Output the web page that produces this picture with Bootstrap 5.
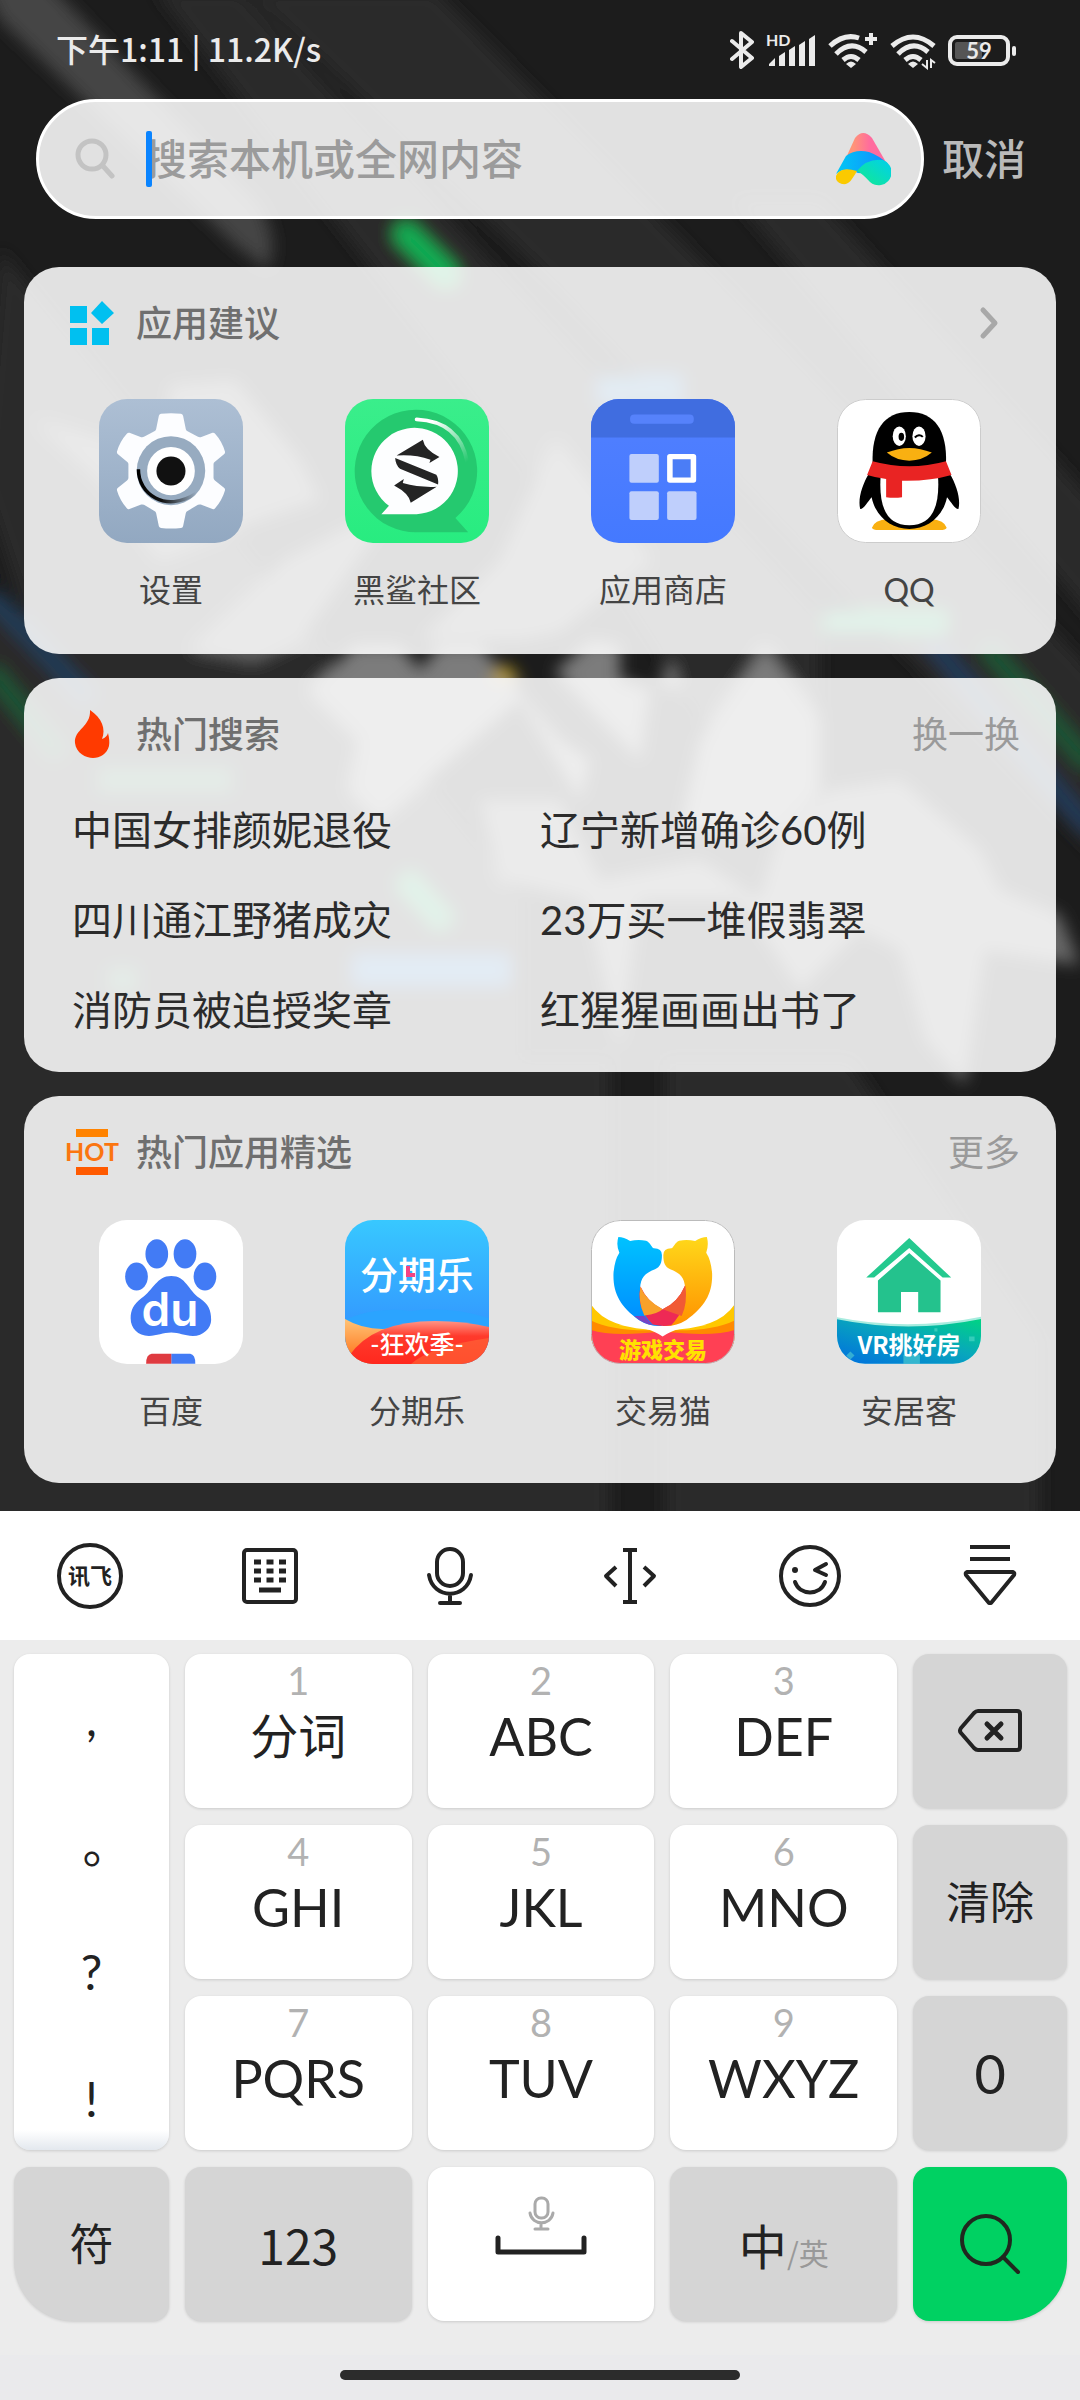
<!DOCTYPE html>
<html lang="zh-CN">
<head>
<meta charset="utf-8">
<meta name="viewport" content="width=device-width, initial-scale=1">
<title>搜索</title>
<link href="https://cdn.jsdelivr.net/npm/bootstrap@5.3.0/dist/css/bootstrap.min.css" rel="stylesheet">
<style>
body{font-family:"Lato","Noto Sans CJK SC",sans-serif;background:#ececec;color:#222}
button,input{font-family:inherit}
svg{display:block;flex:none}
.stage{background:#1c1c1c;padding-bottom:28px;overflow:hidden}
.wallpaper{left:0;top:0;width:100%;height:100%}
.statusbar{height:99px;padding:0 64px 0 56px;color:#ebebeb;font-size:32px;font-weight:500}
.clock{font-family:"Noto Sans CJK SC",sans-serif;line-height:48px;padding-bottom:4px}
.status-icons{gap:12px}
.search-row{padding:0 54px 0 36px;gap:18px;margin-bottom:48px}
.search-box{height:120px;border:3px solid #fff;border-radius:60px;background:rgba(255,255,255,.87);padding:0 30px 0 36px}
.search-box input{font-size:42px;font-weight:500;height:60px;margin-left:30px;background:none;outline:0}
.search-box input::placeholder{color:#9b9b9b;opacity:1}
.caret{left:31px;top:2px;width:6px;height:56px;border-radius:2px;background:#0a84ff}
.cancel{font-size:42px;font-weight:500;color:#bababa;white-space:nowrap}
.panels{gap:24px;padding:0 24px}
.panel{background:rgba(255,255,255,.87);border-radius:35px}
.panel-head{height:112px;padding:0 36px 0 42px}
.panel-icon{width:54px;height:54px;margin-right:16px}
.panel-title{font-size:36px;font-weight:500;color:#6f6f6f;line-height:48px}
.panel-link{font-size:36px;color:#9a9a9a;line-height:48px}
.apps{padding:12px 24px 48px}
.apps-lower{padding:20px 24px 40px}
.app-link{color:#444;font-size:32px;line-height:48px;gap:23px;flex:1 1 0}
.app-art{width:144px;height:144px;border-radius:28px;overflow:hidden}
.hot-list{grid-template-columns:1fr 1fr;padding:0 48px 17px;margin-top:-5px}
.hot-list a{font-size:40px;line-height:90px;color:#2b2b2b}
.more{margin-right:20px}
.toolbar-keys{height:129px;background:#fff}
.tool{flex:1 1 0}
.keys{grid-template-columns:155fr 227fr 227fr 227fr 154fr;grid-auto-rows:154px;gap:17px 16px;padding:14px 13px 34px 14px}
.kkey{border:0;border-radius:16px;background:#fff;color:#222;box-shadow:0 1px 3px rgba(0,0,0,.14);padding:0;font-size:44px}
.fn{background:#d5d5d5}
.num{font-size:38px;line-height:40px;color:#b2b2b2;padding-top:6px}
.let{font-size:52px;line-height:72px}
.let-cn{font-size:48px;line-height:72px}
.punct{grid-row:span 3;background:linear-gradient(#fff 96%,#e3e8ee)}
.punct button{border:0;background:none;font-size:48px;line-height:60px;flex:0 0 127px;color:#222}
.punct .cn-stop{padding-left:36px}
.big{font-size:54px}
.mid{font-size:48px;font-family:"Noto Sans CJK SC",sans-serif}
.alt{font-size:30px;color:#999}
.corner-l{border-bottom-left-radius:60px}
.corner-r{border-bottom-right-radius:60px;background:#00d162}
.homebar{height:45px;background:#eaeaec;padding-top:15px}
.homebar div{width:400px;height:10px;border-radius:5px;background:#2c2c2c}
svg text{font-family:"Lato","Noto Sans CJK SC",sans-serif}
</style>
<script src="https://cdn.jsdelivr.net/npm/bootstrap@5.3.0/dist/js/bootstrap.bundle.min.js"></script>
</head>
<body>
<main class="stage position-relative">
<svg class="wallpaper position-absolute" viewBox="0 0 1080 1511" preserveAspectRatio="none" aria-hidden="true">
<defs><filter id="soft" x="-20%" y="-20%" width="140%" height="140%"><feGaussianBlur stdDeviation="8"/></filter></defs>
<g filter="url(#soft)">
<path d="M155 -10H240L820 620V900L600 560Z M245 -10H435L740 300L1100 680V860L560 290Z" fill="#2a2a2a"/>
<path d="M0 250L220 520L520 900V1540H-20V580L40 660L-20 480Z" fill="#292929"/>
<path d="M735 200H820L1110 520V640Z" fill="#292929"/>
<path d="M540 1060H610V1540H540Z M665 1060H850L1040 1340V1540H665Z" fill="#2a2a2a"/>
<path d="M-20 1060H600V1540H-20Z" fill="#292929"/>
<path d="M-20 -20H45L260 205Q280 240 268 270L235 245L0 20Z" fill="#454545"/>
<path d="M406 234L446 274" stroke="#10b055" stroke-width="24" stroke-linecap="round"/>
<path d="M-10 595L90 700" stroke="#223c58" stroke-width="18"/>
<path d="M-10 670L60 755M985 645L1090 765" stroke="#1c5534" stroke-width="20"/>
<path d="M930 640L1090 830" stroke="#223a58" stroke-width="18"/>
<path d="M35 420L165 460L170 385L235 380L300 460L320 500L260 520L160 560L100 480Z" fill="#5e5e5e"/>
<path d="M285 560L400 500L300 640L255 662L190 650Z" fill="#606060"/>
<path d="M555 440L650 560L560 632L520 640L420 640L500 560Z" fill="#606060"/>
<path d="M310 690L355 645H400L420 670L440 645H480L560 740L590 760L580 800L520 700L450 760L380 820L350 790L360 740Z" fill="#7c7c7c"/>
<path d="M555 672L590 640L620 645V680L650 690L640 760L600 720Z" fill="#7c7c7c"/>
<path d="M670 660L680 690L660 685ZM765 645L820 720V790L780 830L680 830L700 740Z" fill="#7c7c7c"/>
<path d="M480 800H560L600 880L700 860L760 900L780 830L830 790L900 780L980 850L1000 890L1060 915L1080 965L985 950L965 1085L925 1040L900 950L860 930L800 990L740 900L640 900L620 1050L585 900L500 880Z" fill="#686868"/>
<path d="M600 390H680" stroke="#2870a8" stroke-width="26"/>
<path d="M825 622H945" stroke="#20a060" stroke-width="20"/>
<path d="M355 970H508" stroke="#2870b0" stroke-width="26"/>
<path d="M404 878L446 924" stroke="#20a060" stroke-width="20"/>
<path d="M100 780H230M110 980H135" stroke="#307050" stroke-width="20"/>
<path d="M495 678L505 668L515 678Z" fill="#c0a018" stroke="#c0a018" stroke-width="6"/>
</g>
</svg>
<div class="position-relative">
<header class="statusbar d-flex align-items-center justify-content-between">
<span class="clock">下午1:11 | 11.2K/s</span>
<div class="status-icons d-flex align-items-center">
<svg width="24" height="40" viewBox="0 0 24 40" fill="none" stroke="#ebebeb" stroke-width="4" stroke-linejoin="round" stroke-linecap="round" aria-label="蓝牙"><path d="M2 11L22 28L11 37V3L22 12L2 29"/></svg>
<svg width="50" height="40" viewBox="0 0 50 40" fill="#ebebeb" aria-label="信号"><text x="0" y="16" font-size="16" font-weight="700">HD</text><path d="M3 36V34L9 28V36ZM13 36V26L19 22V36ZM23 36V20L29 16V36ZM33 36V15L39 11V36ZM43 36V9L49 5V36Z"/></svg>
<svg width="50" height="40" viewBox="0 0 50 40" fill="none" stroke="#ebebeb" stroke-width="5" aria-label="无线网络"><path d="M2 16Q16 3 31 8M8 24Q23 9 38 22M15 30Q23 23 31 30"/><path d="M18 34Q23 29 28 34L23 38Z" fill="#ebebeb" stroke="none"/><path d="M43 3V15M37 9H49" stroke-width="4"/></svg>
<svg width="46" height="40" viewBox="0 0 46 40" fill="none" stroke="#ebebeb" stroke-width="5" aria-label="无线网络二"><path d="M2 16Q23 -2 44 16M8 24Q23 9 38 22M15 30Q23 23 31 30"/><path d="M18 34Q23 29 28 34L23 38Z" fill="#ebebeb" stroke="none"/><path d="M32 34L37 38V30M45 33L41 30V38" stroke-width="2"/></svg>
<svg width="68" height="40" viewBox="0 0 68 40" aria-label="电量"><rect x="2" y="7" width="58" height="27" rx="7" fill="none" stroke="#ebebeb" stroke-width="4"/><rect x="7" y="12" width="27" height="17" rx="2" fill="#555"/><rect x="64" y="16" width="4" height="10" rx="2" fill="#ebebeb"/><text x="31" y="29" text-anchor="middle" font-size="22" font-weight="700" fill="#ebebeb">59</text></svg>
</div>
</header>
<form class="search-row d-flex align-items-center" role="search">
<div class="search-box d-flex align-items-center flex-grow-1">
<svg width="40" height="42" viewBox="0 0 40 42" fill="none" stroke="#c3c3c3" stroke-width="5" stroke-linecap="round"><circle cx="17" cy="17" r="14"/><path d="M28 28L37 38"/></svg>
<div class="position-relative flex-grow-1"><input class="form-control border-0 shadow-none p-0" type="text" placeholder="搜索本机或全网内容" aria-label="搜索本机或全网内容"><span class="caret position-absolute"></span></div>
<svg width="56" height="54" viewBox="0 0 56 54" aria-hidden="true"><defs><linearGradient id="a1"><stop offset=".2" stop-color="#ff9478"/><stop offset=".6" stop-color="#ff6b9e"/></linearGradient><linearGradient id="a2"><stop offset="0" stop-color="#00c8f4"/><stop offset=".9" stop-color="#1090ff"/></linearGradient><linearGradient id="a3" x1="0" y1="1" x2="1" y2="0"><stop offset=".3" stop-color="#0de3a8"/><stop offset="1" stop-color="#00cfee"/></linearGradient></defs><path d="M20 6Q28 -4 37 6L52 32L25 36L10 28Z" fill="url(#a1)"/><path d="M1 42L11 24Q20 17 34 20Q45 24 53 32L38 42L23 41Q10 34 1 42Z" fill="url(#a2)"/><path d="M22 39Q32 26 48 28A13 13 0 0 1 46 53C34 55 33 44 22 39Z" fill="url(#a3)"/><path d="M1 44Q5 34 22 39C16 49 14 53 7 52Q0 50 1 44Z" fill="#fbca00"/></svg>
</div>
<button type="button" class="btn border-0 p-0 cancel">取消</button>
</form>
<div class="panels d-flex flex-column">
<section class="panel">
<div class="panel-head d-flex align-items-center">
<svg class="panel-icon" viewBox="0 0 54 54" fill="#00c0f0"><path d="M4 10H21V27H4ZM4 32H21V49H4ZM26 32H43V49H26ZM36 5L48 17L36 28L25 17Z"/></svg>
<h2 class="panel-title m-0 flex-grow-1">应用建议</h2>
<a href="#" class="more" aria-label="更多应用"><svg width="24" height="36" viewBox="0 0 24 36" fill="none" stroke="#a8a8a8" stroke-width="5" stroke-linecap="round" stroke-linejoin="round"><path d="M7 5L19 18L7 31"/></svg></a>
</div>
<div class="apps apps-lower d-flex">
<a href="#" class="app-link d-flex flex-column align-items-center text-decoration-none">
<svg class="app-art" viewBox="0 0 144 144"><defs><linearGradient id="s1" x2="0" y2="1"><stop stop-color="#adbfd4"/><stop offset="1" stop-color="#92a8c1"/></linearGradient><linearGradient id="s2"><stop stop-color="#000"/><stop offset=".4" stop-color="#111"/><stop offset="1" stop-color="#111" stop-opacity="0"/></linearGradient></defs><rect width="144" height="144" fill="url(#s1)"/>
<g transform="scale(.346 .335) translate(-289 -418)"><path fill="#fcfdff" d="M468 462Q497 459 526 462Q531 463 532 468L540 508Q541 512 545 514L575 531Q579 533 583 532L617 519Q621 518 624 521Q645 545 653 575Q654 579 651 582L624 605Q620 608 620 612V654Q620 658 624 661L651 684Q654 687 653 691Q645 720 624 745Q621 748 617 746L583 733Q579 732 575 734L545 752Q541 754 540 758L532 798Q531 803 526 803Q497 806 468 803Q463 802 462 798L454 758Q453 754 449 752L419 734Q415 732 411 733L377 746Q373 748 370 745Q349 720 341 691Q340 687 343 684L370 661Q374 658 374 654V612Q374 608 370 605L343 582Q340 579 341 575Q349 545 370 521Q373 518 377 519L411 532Q415 533 419 531L449 514Q453 512 454 508L462 468Q463 463 468 462Z"/><ellipse cx="497" cy="632" rx="99" ry="103" fill="#97abc0"/><path d="M403 628C402 700 480 760 570 700" fill="none" stroke="url(#s2)" stroke-width="10"/><ellipse cx="497" cy="633" rx="69" ry="72" fill="#fff"/><ellipse cx="497" cy="633" rx="42" ry="43" fill="#111"/></g></svg>
<span>设置</span></a>
<a href="#" class="app-link d-flex flex-column align-items-center text-decoration-none">
<svg class="app-art" viewBox="0 0 144 144"><defs><linearGradient id="k1" x2="0" y2="1"><stop stop-color="#3aee8b"/><stop offset="1" stop-color="#28ec80"/></linearGradient><linearGradient id="k2" x2="1" y2="1"><stop offset=".2" stop-color="#fff"/><stop offset="1" stop-color="#fff" stop-opacity="0"/></linearGradient></defs><rect width="144" height="144" fill="url(#k1)"/>
<g transform="scale(.346 .335) translate(-1004 -418)"><path d="M1211 816A177 183 0 1 1 1323 773L1360 816Z" fill="#25c96f"/><path d="M1211 762A125 129 0 1 0 1131 737L1109 762Z" fill="#fdfeff"/><path d="M1211 479Q1335 485 1357 605" fill="none" stroke="url(#k2)" stroke-width="11" stroke-linecap="round"/><path fill="#242424" d="M1229 540Q1234 570 1277 591L1248 609L1251 599Q1205 583 1153 587ZM1149 594L1268 644Q1275 655 1273 673L1163 626Q1150 615 1149 594ZM1194 728Q1190 700 1146 676L1174 657L1171 669Q1220 683 1269 680Z"/></g></svg>
<span>黑鲨社区</span></a>
<a href="#" class="app-link d-flex flex-column align-items-center text-decoration-none">
<svg class="app-art" viewBox="0 0 144 144"><defs><linearGradient id="m1" x2="0" y2="1"><stop stop-color="#5280ff"/><stop offset="1" stop-color="#4479ff"/></linearGradient></defs><rect width="144" height="144" fill="url(#m1)"/>
<g transform="scale(.346 .335) translate(-151 -418)"><path d="M150 418H570V533H150Z" fill="#406de0"/><rect x="264" y="464" width="184" height="28" rx="12" fill="#5682fb"/><g fill="#bfcffc"><rect x="262" y="582" width="85" height="86" rx="6"/><rect x="262" y="693" width="85" height="86" rx="6"/><rect x="371" y="693" width="85" height="86" rx="6"/></g><rect x="379" y="590" width="68" height="70" fill="#4b7df6" stroke="#fff" stroke-width="16" stroke-linejoin="round"/></g></svg>
<span>应用商店</span></a>
<a href="#" class="app-link d-flex flex-column align-items-center text-decoration-none">
<svg class="app-art" viewBox="0 0 144 144"><rect x=".5" y=".5" width="143" height="143" rx="28" fill="#fff" stroke="#ccc"/>
<g transform="scale(.346 .335) translate(-863 -418)"><path d="M964 802Q970 780 1010 776L1072 800L1134 776Q1174 780 1180 802Q1178 809 1160 809H984Q966 809 964 802Z" fill="#f9b011"/><path d="M956 640C935 675 923 718 930 746C940 747 952 724 963 711C975 770 1020 806 1072 806C1124 806 1169 770 1181 711C1192 724 1204 747 1214 746C1221 718 1209 675 1188 640Z"/><path d="M989 650Q980 795 1072 795Q1164 795 1155 650Z" fill="#fff"/><path d="M966 612C962 510 1000 457 1072 457S1182 510 1178 612Q1072 650 966 612Z"/><path d="M966 604Q1072 634 1178 604L1194 645Q1130 664 1051 662V711Q1028 714 1005 711V657Q975 653 950 645Z" fill="#e92423"/><ellipse cx="1043" cy="529" rx="19" ry="29" fill="#fff"/><ellipse cx="1100" cy="529" rx="19" ry="29" fill="#fff"/><ellipse cx="1049" cy="531" rx="8" ry="12"/><path d="M1088 533Q1100 520 1111 531" fill="none" stroke="#000" stroke-width="6"/><path d="M1007 578Q1040 564 1072 564T1137 578Q1110 602 1072 602T1007 578Z" fill="#f9b011"/></g></svg>
<span>QQ</span></a>
</div>
</section>
<section class="panel">
<div class="panel-head d-flex align-items-center">
<svg class="panel-icon" viewBox="0 0 54 54" fill="#ff3a00"><path d="M24 3C36 11 40 22 36 32Q41 30 42 26Q44 34 43 39C41 47 34 51 27 51S10 46 9 36C8 22 25 20 24 3Z"/></svg>
<h2 class="panel-title m-0 flex-grow-1">热门搜索</h2>
<a href="#" class="panel-link text-decoration-none">换一换</a>
</div>
<div class="hot-list d-grid">
<a href="#" class="text-decoration-none">中国女排颜妮退役</a><a href="#" class="text-decoration-none">辽宁新增确诊60例</a>
<a href="#" class="text-decoration-none">四川通江野猪成灾</a><a href="#" class="text-decoration-none">23万买一堆假翡翠</a>
<a href="#" class="text-decoration-none">消防员被追授奖章</a><a href="#" class="text-decoration-none">红猩猩画画出书了</a>
</div>
</section>
<section class="panel">
<div class="panel-head d-flex align-items-center">
<svg class="panel-icon" viewBox="0 0 54 54"><rect x="10" y="4" width="32" height="8" fill="#ff8300"/><rect x="10" y="42" width="32" height="8" fill="#ff5a00"/><text x="26" y="36" text-anchor="middle" font-size="25" font-weight="700" fill="#fb7510">HOT</text></svg>
<h2 class="panel-title m-0 flex-grow-1">热门应用精选</h2>
<a href="#" class="panel-link text-decoration-none">更多</a>
</div>
<div class="apps d-flex">
<a href="#" class="app-link d-flex flex-column align-items-center text-decoration-none">
<svg class="app-art" viewBox="0 0 144 144"><rect width="144" height="144" fill="#fff"/>
<g transform="scale(.344 .333) translate(-287 -390)" fill="#427bf5"><ellipse cx="455" cy="492" rx="33" ry="44"/><ellipse cx="537" cy="492" rx="33" ry="44"/><ellipse cx="396" cy="560" rx="33" ry="42"/><ellipse cx="595" cy="560" rx="33" ry="42"/><path d="M497 558C540 558 545 600 580 625C605 643 613 660 613 690C613 715 590 738 560 738C535 738 520 728 497 728S455 738 432 738C400 738 379 715 379 685C379 660 388 643 410 625C445 600 455 558 497 558Z"/><path d="M497 792H552Q567 794 567 822H497Z"/><path d="M497 792H440Q424 794 424 822H497Z" fill="#df3b41"/></g><text x="71" y="106" text-anchor="middle" font-size="46" style="font-family:Inter,sans-serif" font-weight="600" fill="#fff">du</text></svg>
<span>百度</span></a>
<a href="#" class="app-link d-flex flex-column align-items-center text-decoration-none">
<svg class="app-art" viewBox="0 0 144 144"><defs><linearGradient id="f1" x2="0" y2="1"><stop stop-color="#38c8ff"/><stop offset=".7" stop-color="#339bff"/></linearGradient><linearGradient id="f2" x2="0" y2="1"><stop stop-color="#ffc477"/><stop offset="1" stop-color="#ff6a10"/></linearGradient><linearGradient id="f3" x2="0" y2="1"><stop stop-color="#ff9484"/><stop offset=".35" stop-color="#ff3a2c"/><stop offset="1" stop-color="#ff281e"/></linearGradient></defs><rect width="144" height="144" fill="url(#f1)"/><path d="M0 100Q30 86 66 91Q104 86 144 98V125H0Z" fill="#2ba4ff"/><path d="M0 99Q22 112 50 108L30 144H0Z" fill="url(#f2)"/><path d="M4 136Q28 101 90 101Q120 101 144 107V144H0Z" fill="url(#f3)"/><path d="M66 144Q86 126 144 118V144Z" fill="#ff6a38" opacity=".6"/><text x="72" y="69" text-anchor="middle" font-size="38" font-weight="500" fill="#fff">分期乐</text><path d="M61 46H65V53H70V57H61Z" fill="#f34484"/><text x="72" y="134" text-anchor="middle" font-size="25" font-weight="500" fill="#fff">-狂欢季-</text></svg>
<span>分期乐</span></a>
<a href="#" class="app-link d-flex flex-column align-items-center text-decoration-none">
<svg class="app-art" viewBox="0 0 144 144"><defs><linearGradient id="j1" x2="0" y2="1"><stop stop-color="#00c2ff"/><stop offset="1" stop-color="#008bff"/></linearGradient><linearGradient id="j2" x2="0" y2="1"><stop stop-color="#ffd81a"/><stop offset="1" stop-color="#ff9200"/></linearGradient><clipPath id="jc"><rect width="144" height="144" rx="30"/></clipPath></defs><g clip-path="url(#jc)"><rect width="144" height="144" fill="#fff"/>
<g transform="scale(.346 .333) translate(-150 -390)"><path d="M150 644Q200 722 357 720Q515 722 565 644V760H150Z" fill="#ffc800"/><path d="M150 692Q220 728 357 720Q495 728 565 692V780H150Z" fill="#ff8a00"/><path d="M150 720Q210 742 357 725Q505 742 565 720V822H150Z" fill="#ff4054"/><path d="M230 705Q320 710 357 740Q394 710 485 705L357 690Z" fill="#fff"/><path d="M229 441Q245 441 263 453Q285 448 309 452C323 458 324 472 332 475Q355 476 355 495C355 520 350 530 335 538C310 548 293 560 292 595C290 640 310 675 357 708Q320 711 288 690C235 650 213 610 215 550Q218 510 232 488Q222 466 229 441Z" fill="url(#j1)"/><path d="M485 441Q469 441 451 453Q429 448 405 452C391 458 390 472 382 475Q359 476 359 495C359 520 364 530 379 538C404 548 421 560 422 595C424 640 404 675 357 708Q394 711 426 690C479 650 502 610 500 550Q497 510 483 488Q491 466 485 441Z" fill="url(#j2)"/><path d="M293 590Q315 640 357 658Q400 640 422 587Q430 655 382 706Q355 711 328 704Q280 655 293 590Z" fill="#ee2955"/><path d="M293 590Q307 630 357 658Q345 671 304 677Q285 635 293 590Z" fill="#f8a12a"/><path d="M422 587Q430 640 412 678L357 658Q400 640 422 587Z" fill="#f15a35"/><path d="M275 678H304L328 706Q302 703 275 678Z" fill="#7844c4"/></g><text x="72" y="138" text-anchor="middle" font-size="22" font-weight="900" fill="#ffe200">游戏交易</text></g><rect x=".5" y=".5" width="143" height="143" rx="29" fill="none" stroke="#bbb"/></svg>
<span>交易猫</span></a>
<a href="#" class="app-link d-flex flex-column align-items-center text-decoration-none">
<svg class="app-art" viewBox="0 0 144 144"><defs><linearGradient id="h1" x1="0" y1="1" x2="1" y2="0"><stop stop-color="#006de0"/><stop offset=".55" stop-color="#08a6bd"/><stop offset="1" stop-color="#00d483"/></linearGradient></defs><rect width="144" height="144" fill="#fff"/><g transform="scale(.344 .333) translate(-862 -390)"><path d="M1072 444L1194 563H1169L1072 474L970 563H947Z" fill="#25c98f"/><path d="M1072 489L1163 572V667H1098V606H1048V667H981V572Z" fill="#24c28d"/><path d="M862 682Q1072 725 1282 680V822H862Z" fill="#a8ecdf"/><path d="M862 688Q1072 732 1282 687V822H862Z" fill="url(#h1)"/><path d="M1145 715h9v10h-9zM1246 740h16v14h-16zM901 785l12 12-12 12-12-12zM1055 795h48v27h-48z" fill="#64dfd0" opacity=".5"/></g><text x="72" y="134" text-anchor="middle" font-size="24" font-weight="700" style="font-family:'Noto Sans CJK SC',sans-serif" fill="#fff">VR挑好房</text></svg>
<span>安居客</span></a>
</div>
</section>
</div>
</div>
</main>
<section aria-label="键盘">
<div class="toolbar-keys d-flex align-items-center">
<button class="tool btn border-0 p-0 d-flex justify-content-center" aria-label="讯飞"><svg width="68" height="70" viewBox="0 0 68 70"><circle cx="34" cy="35" r="31" fill="none" stroke="#222" stroke-width="4"/><text x="34" y="43" text-anchor="middle" font-size="22" font-weight="700" fill="#222">讯飞</text></svg></button>
<button class="tool btn border-0 p-0 d-flex justify-content-center" aria-label="键盘"><svg width="58" height="58" viewBox="0 0 58 58"><rect x="3" y="3" width="52" height="52" rx="3" fill="none" stroke="#222" stroke-width="4"/><path d="M13 15h32M13 24h32M13 33h32" stroke="#222" stroke-width="5" stroke-dasharray="7 5.5"/><path d="M18 43h22" stroke="#222" stroke-width="5"/></svg></button>
<button class="tool btn border-0 p-0 d-flex justify-content-center" aria-label="语音"><svg width="50" height="60" viewBox="0 0 50 60" fill="none" stroke="#222" stroke-width="4" stroke-linecap="round"><rect x="12" y="3" width="26" height="37" rx="13"/><path d="M4 29C8 54 42 54 46 29M25 48V57M15 57H35"/></svg></button>
<button class="tool btn border-0 p-0 d-flex justify-content-center" aria-label="光标"><svg width="56" height="58" viewBox="0 0 56 58" fill="none" stroke="#222" stroke-width="4" stroke-linejoin="round"><path d="M21 3H35M28 3V55M21 55H35M14 20L4 29L14 39M42 20L52 29L42 39"/></svg></button>
<button class="tool btn border-0 p-0 d-flex justify-content-center" aria-label="表情"><svg width="66" height="66" viewBox="0 0 66 66" fill="none" stroke="#222" stroke-width="4" stroke-linecap="round" stroke-linejoin="round"><circle cx="33" cy="33" r="29"/><path d="M18 39C23 53 43 53 48 39M49 21L38 27L49 32"/><circle cx="18" cy="27" r="3" fill="#222" stroke="none"/></svg></button>
<button class="tool btn border-0 p-0 d-flex justify-content-center" aria-label="收起"><svg width="58" height="64" viewBox="0 0 58 64" fill="none" stroke="#222" stroke-width="4" stroke-linejoin="round"><path d="M9 3H49M9 15H49M6 28H52Q54 29 53 31L30 59H28L5 31Q4 29 6 28Z"/></svg></button>
</div>
<div class="keys d-grid">
<div class="kkey punct d-flex flex-column overflow-hidden"><button>,</button><button class="cn-stop">。</button><button>?</button><button>!</button></div>
<button class="kkey d-flex flex-column align-items-center"><span class="num">1</span><span class="let-cn">分词</span></button>
<button class="kkey d-flex flex-column align-items-center"><span class="num">2</span><span class="let">ABC</span></button>
<button class="kkey d-flex flex-column align-items-center"><span class="num">3</span><span class="let">DEF</span></button>
<button class="kkey fn d-flex align-items-center justify-content-center" aria-label="退格"><svg width="66" height="46" viewBox="0 0 66 46" fill="none" stroke="#222" stroke-width="4" stroke-linejoin="round" stroke-linecap="round"><path d="M21 3H60Q63 3 63 6V39Q63 42 60 42H21Q19 42 17 40L4 25Q2 23 4 20L17 5Q19 3 21 3Z"/><path d="M30 16L44 30M44 16L30 30" stroke-width="5"/></svg></button>
<button class="kkey d-flex flex-column align-items-center"><span class="num">4</span><span class="let">GHI</span></button>
<button class="kkey d-flex flex-column align-items-center"><span class="num">5</span><span class="let">JKL</span></button>
<button class="kkey d-flex flex-column align-items-center"><span class="num">6</span><span class="let">MNO</span></button>
<button class="kkey fn">清除</button>
<button class="kkey d-flex flex-column align-items-center"><span class="num">7</span><span class="let">PQRS</span></button>
<button class="kkey d-flex flex-column align-items-center"><span class="num">8</span><span class="let">TUV</span></button>
<button class="kkey d-flex flex-column align-items-center"><span class="num">9</span><span class="let">WXYZ</span></button>
<button class="kkey fn big">0</button>
<button class="kkey fn corner-l">符</button>
<button class="kkey fn mid">123</button>
<button class="kkey d-flex align-items-center justify-content-center" aria-label="空格"><svg width="94" height="96" viewBox="0 0 94 96" fill="none"><g stroke="#aaa" stroke-width="3" stroke-linecap="round"><rect x="41" y="2" width="13" height="20" rx="6"/><path d="M36 17C38 30 57 30 59 17M47 27V33M41 33H54"/></g><path d="M4 42V56H90V42" stroke="#222" stroke-width="5" stroke-linecap="round" stroke-linejoin="round"/></svg></button>
<button class="kkey fn mid">中<span class="alt">/英</span></button>
<button class="kkey corner-r d-flex align-items-center justify-content-center" aria-label="搜索"><svg width="64" height="64" viewBox="0 0 64 64" fill="none" stroke="#20281f" stroke-width="4" stroke-linecap="round"><circle cx="28" cy="28" r="24"/><path d="M45 45L60 60"/></svg></button>
</div>
<div class="homebar"><div class="mx-auto"></div></div>
</section>
</body>
</html>
